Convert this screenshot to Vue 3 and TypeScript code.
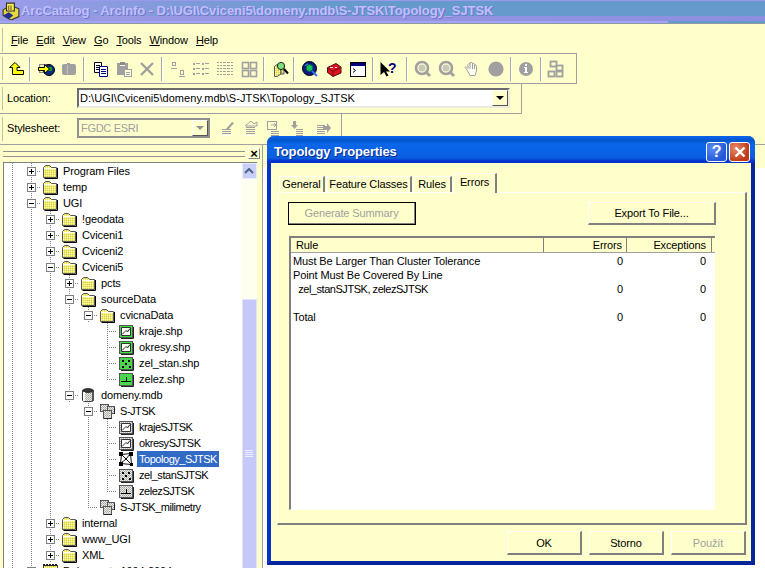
<script setup lang="ts">
type Shape = [string, Record<string, string | number>, string?];

const G = '#a0a0a0';
const r = (x: number, y: number, w: number, h: number, fill: string, stroke = 'none', sw = 1): Shape =>
  ['rect', { x: x + (stroke === 'none' ? 0 : 0.5), y: y + (stroke === 'none' ? 0 : 0.5), width: w, height: h, fill, stroke, 'stroke-width': sw }];
const p = (d: string, fill: string, stroke = 'none', sw = 1): Shape =>
  ['path', { d, fill, stroke, 'stroke-width': sw }];
const c = (cx: number, cy: number, rad: number, fill: string, stroke = 'none', sw = 1): Shape =>
  ['circle', { cx, cy, r: rad, fill, stroke, 'stroke-width': sw }];

const lines = (x: number, w: number, ys: number[], col = G): Shape[] => ys.map((y) => r(x, y, w, 1, col));

const polyGlyph: Shape[] = [p('M3.5 12.5V4.5H12.5V12.5ZM4 11.5L8 7.5 9.5 9 12 5.5', '#fff', '#333')];
const feature = (fill: string, kind: string): Shape[] => {
  const base: Shape[] = [r(1, 2, 13, 12, fill, '#555'), p('M15.5 4V15.5H3', 'none', '#222')];
  if (kind === 'poly') return [...base, ...polyGlyph];
  if (kind === 'point') return [...base, r(4, 5, 2, 2, '#000'), r(10, 5, 2, 2, '#000'), r(7, 8, 2, 2, '#000'), r(4, 11, 2, 2, '#000'), r(11, 11, 2, 2, '#000')];
  return [...base, p('M3 10.5H13M8.5 6V10.5', 'none', '#000')];
};

const icons: Record<string, Shape[]> = {
  folder: [
    p('M1.5 14.5V4.5L3.5 2.5H7.5L9.5 4.5H14.5V14.5Z', 'url(#ditherYellow)', '#555'),
    p('M2 5.5H14', 'none', '#fff'),
    p('M15.5 5V15.5H2.5', 'none', '#000'),
  ],
  drive: [
    r(1, 2, 14, 13, 'url(#ditherYellow)', '#444'),
    ...lines(1, 14, [1, 2], '#222'),
    ...[3, 6, 9, 12].map((x) => r(x, 0, 1, 2, '#fff')),
    ...lines(2, 12, [6, 9, 12], '#777'),
  ],
  shpPoly: feature('url(#ditherGreen)', 'poly'),
  shpPoint: feature('url(#ditherGreen)', 'point'),
  shpLine: feature('url(#ditherGreen)', 'line'),
  fcPoly: feature('url(#ditherGray)', 'poly'),
  fcPoint: feature('url(#ditherGray)', 'point'),
  fcLine: feature('url(#ditherGray)', 'line'),
  mdb: [
    p('M2.5 3.5V13.5C2.5 15 13.5 15 13.5 13.5V3.5Z', 'url(#ditherGray)', '#333'),
    ['ellipse', { cx: 8, cy: 3.5, rx: 5.5, ry: 2.5, fill: '#333' }],
    r(3, 5, 2, 9, '#fff'),
    r(12, 5, 2, 9, '#555'),
  ],
  dataset: [
    r(1, 1, 8, 7, 'url(#ditherGray)', '#555'),
    r(8, 3, 7, 7, 'url(#ditherGray)', '#555'),
    r(4, 7, 8, 8, '#d8d8d0', '#555'),
    r(5, 8, 6, 6, 'url(#ditherGray)'),
    p('M15.5 5V11M13 15.5H5', 'none', '#222'),
  ],
  topology: [
    p('M3.5 3.5L12.5 2.5 13.5 13.5 2.5 12.5ZM3.5 3.5L8 8 13.5 13.5M12.5 2.5L8 8 2.5 12.5', '#fff', '#111'),
    r(1, 1, 4, 4, '#000'), r(11, 1, 4, 4, '#000'), r(1, 11, 4, 4, '#000'), r(12, 12, 3, 3, '#000'), r(7, 7, 2, 2, '#000'),
  ],
  up: [p('M7 1.5L12 6.5H9V9.5H15.5V13.5H4.5V6.5H1.5Z', '#ff0', '#000')],
  connect: [
    r(1, 3, 9, 8, '#f2efc0', '#888'),
    c(11, 9, 5.5, '#0a2a80', '#000'),
    p('M9 6H14V10H10Z', '#169030'),
    p('M0.5 6.5H6.5V3.5L11.5 8 6.5 12.5V9.5H0.5Z', '#ff0', '#000'),
  ],
  disconnect: [p('M1 4.5Q1 3 3 3H6V2H9V3H13Q15 3 15 5V12Q15 14 13 14H3Q1 14 1 12Z', G), r(6, 4, 1, 9, '#c4c4b0')],
  copy: [
    p('M1.5 1.5H8.5V11.5H1.5Z', '#fff', '#000'),
    ...lines(3, 4, [4, 6, 8], '#000'),
    p('M6.5 5.5H14.5V15.5H6.5Z', '#fff', '#000080'),
    ...lines(8, 5, [8, 10, 12], '#000080'),
  ],
  paste: [
    r(1, 2, 11, 12, G),
    r(4, 1, 5, 3, '#8c8c8c'),
    r(4, 4, 5, 1, '#ffffcc'),
    r(8, 8, 7, 7, '#ffffe0', G),
    ...lines(10, 4, [11, 13]),
  ],
  del: [p('M2 2L14 14M14 2L2 14', 'none', G, 2.4)],
  largeIcons: [r(2, 1, 3, 3, 'none', G), ...lines(1, 6, [7]), r(10, 9, 3, 4, 'none', G), ...lines(9, 6, [15])],
  list: [...[2, 7, 12].flatMap((y) => [r(0, y, 2, 2, G), r(3, y, 4, 1, G), r(9, y, 2, 2, G), r(12, y, 4, 1, G)])],
  details: [...[1, 4, 7, 10, 13].flatMap((y) => [r(0, y, 2, 1, G), r(3, y, 13, 1, G)]), ...[5, 9, 13].map((x) => r(x, 1, 1, 13, '#ffffcc'))],
  thumbs: [r(1, 1, 6, 6, 'none', G, 1.6), r(9, 1, 6, 6, 'none', G, 1.6), r(1, 9, 6, 6, 'none', G, 1.6), r(9, 9, 6, 6, 'none', G, 1.6)],
  search: [
    p('M1.5 5.5L4 3.5H8V13L4 15.5H1.5Z', 'url(#ditherYellow)', '#555'),
    p('M8 4H11V13H8Z', 'url(#ditherYellow)', '#555'),
    c(8, 5, 3.6, '#7ce07c', '#222'),
    p('M11 8L15 12.5', 'none', '#000', 2),
  ],
  globe: [
    c(7.5, 7.5, 7, '#0a1a80', '#000'),
    c(7.5, 7, 3.4, '#18c060', '#0a6040'),
    p('M10 10L15 15', 'none', '#3070f0', 2),
    p('M3 5Q4 3 6 3', 'none', '#40a0ff'),
  ],
  toolbox: [
    p('M1.5 6.5L10 2.5 15 6V12L7 15.5 1.5 11.5Z', '#e01020', '#501010'),
    p('M1.5 7L7 10.5 15 6M7 10.5V15', 'none', '#701010'),
    r(4, 6, 3, 1, '#fff'), r(9, 6, 2, 1, '#fff'),
  ],
  cmd: [r(0, 1, 15, 14, '#fff', '#000'), r(1, 2, 14, 3, '#000080'), p('M3 7.5L5.5 9.5 3 11.5', 'none', '#000')],
  whats: [
    p('M0.5 1V14L4 11 6.5 15.5 8.5 14.5 6 10.5H10Z', '#000'),
    ['text', { x: 8, y: 12, 'font-size': 14, 'font-weight': 700, fill: '#000080', 'font-family': '"Liberation Sans", sans-serif' }, '?'],
  ],
  zoomIn: [c(7, 7, 6, 'none', G, 2.6), c(7, 7, 3.5, '#c8c8b8'), p('M11 11L15 15', 'none', G, 2.8)],
  zoomOut: [c(7, 7, 6, 'none', G, 2.6), c(7, 7, 3.5, '#c8c8b8'), p('M11 11L15 15', 'none', G, 2.8)],
  hand: [
    p('M3 9L1 6.5 2 5.5 4 7.5V3.5L5 2.5 6 3V1.5H7.5L8.5 2V2.5H10L10.5 4H12L12.5 5.5V10L11 14.5H6Z', '#fffff0', G),
    p('M6 3V8M8.5 2.5V8M10.5 4V8', 'none', G),
  ],
  fullExtent: [c(8, 8, 7.6, G)],
  info: [c(8, 8, 7, G), r(7, 3, 2, 2, '#fff'), r(7, 6, 2, 6, '#fff'), r(6, 6, 1, 1, '#fff'), r(6, 11, 4, 1, '#fff')],
  model: [r(3, 0, 6, 5, 'none', G, 1.8), r(9, 4, 6, 5, 'none', G, 1.8), r(1, 10, 6, 5, 'none', G, 1.8), r(9, 10, 6, 5, 'none', G, 1.8)],
  styleEdit: [...lines(3, 9, [9, 11, 13]), p('M7 9L13 2 15 3 9 10Z', G), r(1, 15, 12, 1, '#fff')],
  styleProps: [...lines(3, 9, [7, 9, 11, 13]), p('M2 6L8 1 11 4 14 2V6H3', 'none', G), r(1, 15, 12, 1, '#fff')],
  styleNew: [r(1, 1, 9, 8, 'none', G), p('M5 5H10M8 3L10 5 8 7', 'none', G), ...lines(5, 8, [11, 13, 15])],
  styleImport: [r(3, 1, 3, 4, G), p('M1 5H8L4.5 9Z', G), ...lines(6, 7, [9, 11, 13, 15])],
  styleExport: [...lines(1, 8, [5, 7, 9, 11, 13]), p('M7 6H11V3L15 8 11 13V10H7Z', G)],
};

const layoutBar = (items: Array<string | number>, centers: number[], start: number) => {
  let end = start;
  return items.map((it, idx) => {
    const sep = it === 0;
    const size = sep ? 2 : 16;
    const left = centers[idx] - size / 2;
    const ml = Math.round(left - end);
    end = end + ml + size;
    return { sep, name: sep ? '' : String(it), ml };
  });
};

const mainBar = layoutBar(
  ['up', 0, 'connect', 'disconnect', 0, 'copy', 'paste', 'del', 0, 'largeIcons', 'list', 'details', 'thumbs', 0, 'search', 0, 'globe', 'toolbox', 'cmd', 0, 'whats', 0, 'zoomIn', 'zoomOut', 'hand', 'fullExtent', 0, 'info', 0, 'model'],
  [19, 33, 49, 72, 87, 104, 127, 150, 165, 181, 204, 228, 252, 267, 284, 297, 313, 337, 361, 376, 391, 410, 426, 450, 475, 499, 514, 529, 544, 558],
  3,
);
const styleBar = layoutBar(
  ['styleEdit', 'styleProps', 'styleNew', 'styleImport', 'styleExport'],
  [228, 252, 275, 299, 325],
  211,
);

const menus = ['File', 'Edit', 'View', 'Go', 'Tools', 'Window', 'Help'];

type Row = { cells: string; icon: string; label: string; selected?: boolean };
const tree: Row[] = [
  { cells: 'v+', icon: 'folder', label: 'Program Files' },
  { cells: 'v+', icon: 'folder', label: 'temp' },
  { cells: 'v-', icon: 'folder', label: 'UGI' },
  { cells: 'vv+', icon: 'folder', label: '!geodata' },
  { cells: 'vv+', icon: 'folder', label: 'Cviceni1' },
  { cells: 'vv+', icon: 'folder', label: 'Cviceni2' },
  { cells: 'vv-', icon: 'folder', label: 'Cviceni5' },
  { cells: 'vvv+', icon: 'folder', label: 'pcts' },
  { cells: 'vvv-', icon: 'folder', label: 'sourceData' },
  { cells: 'vvvv-', icon: 'folder', label: 'cvicnaData' },
  { cells: 'vvvv T', icon: 'shpPoly', label: 'kraje.shp' },
  { cells: 'vvvv T', icon: 'shpPoly', label: 'okresy.shp' },
  { cells: 'vvvv T', icon: 'shpPoint', label: 'zel_stan.shp' },
  { cells: 'vvvv L', icon: 'shpLine', label: 'zelez.shp' },
  { cells: 'vvv-', icon: 'mdb', label: 'domeny.mdb' },
  { cells: 'vvv -', icon: 'dataset', label: 'S-JTSK' },
  { cells: 'vvv vT', icon: 'fcPoly', label: 'krajeSJTSK' },
  { cells: 'vvv vT', icon: 'fcPoly', label: 'okresySJTSK' },
  { cells: 'vvv vT', icon: 'topology', label: 'Topology_SJTSK', selected: true },
  { cells: 'vvv vT', icon: 'fcPoint', label: 'zel_stanSJTSK' },
  { cells: 'vvv vL', icon: 'fcLine', label: 'zelezSJTSK' },
  { cells: 'vvv L', icon: 'dataset', label: 'S-JTSK_milimetry' },
  { cells: 'vv+', icon: 'folder', label: 'internal' },
  { cells: 'vv+', icon: 'folder', label: 'www_UGI' },
  { cells: 'vv+', icon: 'folder', label: 'XML' },
  { cells: 'v-', icon: 'drive', label: 'Dokumenty 1994-2004' },
];

const cellClass = (ch: string) =>
  ({ v: 'cell-v', T: 'cell-t', L: 'cell-l', '+': 'cell-t', '-': 'cell-t', ' ': '' } as Record<string, string>)[ch] ?? '';

const isTight = (s: string) => s.includes('JTSK');

const tabs = [
  { label: 'General', width: 46 },
  { label: 'Feature Classes', width: 86 },
  { label: 'Rules', width: 39 },
  { label: 'Errors', width: 44, active: true },
];

const rules = [
  { rule: 'Must Be Larger Than Cluster Tolerance', errors: '0', exceptions: '0' },
  { rule: 'Point Must Be Covered By Line', errors: '', exceptions: '' },
  { rule: '  zel_stanSJTSK, zelezSJTSK', errors: '0', exceptions: '0' },
  { rule: '', errors: '', exceptions: '' },
  { rule: 'Total', errors: '0', exceptions: '0' },
];
</script>

<template>
  <div class="page">
    <svg class="defs" width="0" height="0" aria-hidden="true">
      <defs>
        <pattern id="ditherYellow" width="2" height="2" patternUnits="userSpaceOnUse">
          <rect width="2" height="2" fill="#f8f040" />
          <rect width="1" height="1" fill="#fff8c0" />
          <rect x="1" y="1" width="1" height="1" fill="#c8c890" />
        </pattern>
        <pattern id="ditherGreen" width="2" height="2" patternUnits="userSpaceOnUse">
          <rect width="2" height="2" fill="#38e838" />
          <rect width="1" height="1" fill="#909890" />
        </pattern>
        <pattern id="ditherGray" width="2" height="2" patternUnits="userSpaceOnUse">
          <rect width="2" height="2" fill="#ecece4" />
          <rect width="1" height="1" fill="#a0a0a0" />
          <rect x="1" y="1" width="1" height="1" fill="#b8b8b8" />
        </pattern>
      </defs>
    </svg>

    <header class="titlebar">
      <svg class="app-icon" viewBox="0 0 16 16" width="18" height="18">
        <path d="M1 7L8 3 15 6V13L8 16 1 12Z" fill="#e8d840" stroke="#333" />
        <path d="M4 1H11V8H4Z" fill="#f4ee50" stroke="#333" />
        <path d="M1 12L6 9 10 12 6 15Z" fill="#20308c" />
        <path d="M6 3V7M8 3V7" stroke="#806020" />
      </svg>
      <span class="app-title">ArcCatalog - ArcInfo - D:\UGI\Cviceni5\domeny.mdb\S-JTSK\Topology_SJTSK</span>
    </header>

    <nav class="menubar">
      <span v-for="m in menus" :key="m" class="menu"><u>{{ m[0] }}</u>{{ m.slice(1) }}</span>
    </nav>

    <div class="bar bar-main">
      <template v-for="(it, i) in mainBar" :key="i">
        <span v-if="it.sep" class="sep" :style="{ marginLeft: it.ml + 'px' }"></span>
        <svg v-else class="tool" viewBox="0 0 16 16" width="16" height="16" :style="{ marginLeft: it.ml + 'px' }">
          <component :is="s[0]" v-for="(s, j) in icons[it.name]" :key="j" v-bind="s[1]">{{ s[2] }}</component>
        </svg>
      </template>
    </div>

    <div class="bar bar-location">
      <span class="bar-label">Location:</span>
      <div class="combo">
        <span class="combo-text">D:\UGI\Cviceni5\domeny.mdb\S-JTSK\Topology_SJTSK</span>
        <span class="combo-btn"><i class="caret"></i></span>
      </div>
    </div>

    <div class="bar bar-style">
      <span class="bar-label">Stylesheet:</span>
      <div class="combo combo-off">
        <span class="combo-text">FGDC ESRI</span>
        <span class="combo-btn"><i class="caret caret-off"></i></span>
      </div>
      <svg v-for="(it, i) in styleBar" :key="i" class="tool" viewBox="0 0 16 16" width="16" height="16" :style="{ marginLeft: it.ml + 'px' }">
        <component :is="s[0]" v-for="(s, j) in icons[it.name]" :key="j" v-bind="s[1]" />
      </svg>
    </div>

    <main class="workspace">
      <aside class="tree-pane">
        <div class="pane-head">
          <span class="grip"></span>
          <span class="pane-close">×</span>
        </div>
        <div class="tree-box">
          <div class="tree">
            <div v-for="row in tree" :key="row.label" class="tree-row">
              <span v-for="(ch, k) in row.cells.split('')" :key="k" class="cell" :class="cellClass(ch)">
                <span v-if="ch === '+' || ch === '-'" class="expander">
                  <i class="exp-h"></i>
                  <i v-if="ch === '+'" class="exp-v"></i>
                </span>
              </span>
              <svg class="node-icon" viewBox="0 0 16 16" width="16" height="16">
                <component :is="s[0]" v-for="(s, j) in icons[row.icon]" :key="j" v-bind="s[1]" />
              </svg>
              <span class="node-label" :class="{ selected: row.selected, tight: isTight(row.label) }">{{ row.label }}</span>
            </div>
          </div>
          <div class="scrollbar">
            <span class="scroll-up">
              <svg viewBox="0 0 10 6" width="10" height="6"><path d="M1 5L5 1 9 5" fill="none" stroke="#4d6185" stroke-width="2" /></svg>
            </span>
            <span class="scroll-thumb"><i></i><i></i><i></i><i></i></span>
          </div>
        </div>
      </aside>
      <div class="right-back"><div class="right-white"></div></div>
    </main>

    <section class="dialog">
      <header class="dlg-title">
        <span class="dlg-name">Topology Properties</span>
        <span class="dlg-btn dlg-help">?</span>
        <span class="dlg-btn dlg-close">
          <svg viewBox="0 0 12 12" width="12" height="12"><path d="M1.5 1.5L10.5 10.5M10.5 1.5L1.5 10.5" stroke="#fff" stroke-width="2.4" /></svg>
        </span>
      </header>
      <div class="dlg-body">
        <div class="tabs">
          <span v-for="t in tabs" :key="t.label" class="tab" :class="{ active: t.active }" :style="{ width: t.width + 'px' }">{{ t.label }}</span>
        </div>
        <div class="panel">
          <div class="panel-actions">
            <button class="btn btn-default" disabled>Generate Summary</button>
            <button class="btn btn-export">Export To File...</button>
          </div>
          <div class="list">
            <div class="list-head">
              <span class="col-rule">Rule</span>
              <span class="col-err">Errors</span>
              <span class="col-exc">Exceptions</span>
            </div>
            <div v-for="(row, i) in rules" :key="i" class="list-row">
              <span class="cell-rule" :class="{ tight: isTight(row.rule) }">{{ row.rule }}</span>
              <span class="cell-num cell-num-err">{{ row.errors }}</span>
              <span class="cell-num cell-num-exc">{{ row.exceptions }}</span>
            </div>
          </div>
        </div>
        <footer class="dlg-foot">
          <button class="btn btn-foot">OK</button>
          <button class="btn btn-foot">Storno</button>
          <button class="btn btn-foot btn-off" disabled>Použít</button>
        </footer>
      </div>
    </section>
  </div>
</template>

<style scoped>
.page {
  position: relative;
  width: 765px;
  height: 568px;
  overflow: hidden;
  background: #ffffcc;
  font-family: "Liberation Sans", Arial, sans-serif;
  font-size: 11px;
  line-height: 14px;
  letter-spacing: -0.12px;
  color: #000;
}
.defs { position: absolute; }
.tight { letter-spacing: -0.46px; }

.titlebar {
  height: 24px;
  box-sizing: border-box;
  display: flex;
  align-items: center;
  padding: 0 0 3px 2px;
  border-top: 1px solid #9a9aec;
  border-bottom: 1px solid #8c98a4;
  background:
    linear-gradient(to right, #a4a4f4 0, #a4a4f4 668px, transparent 668px) 0 20px / 100% 3px no-repeat,
    linear-gradient(to right, #9a9ae4, #8e8ee0) 0 15px / 100% 5px no-repeat,
    linear-gradient(to right, #9c9ce8 0, #6699cc 340px);
}
.app-icon { flex: none; }
.app-title {
  margin-left: 1px;
  font-size: 13px;
  font-weight: 700;
  letter-spacing: -0.09px;
  white-space: nowrap;
  color: #c0c0ff;
  text-shadow: 1px 1px 0 #7474c8;
}

.menubar {
  height: 29px;
  display: flex;
  align-items: center;
  gap: 8px;
  padding: 3px 0 0 11px;
  box-sizing: border-box;
  background: linear-gradient(#c0c0a8, #c0c0a8) 2px 4px / 1px calc(100% - 5px) no-repeat;
}

.bar {
  display: flex;
  align-items: center;
  box-sizing: border-box;
  border-right: 1px solid #a0a0a0;
  background: linear-gradient(#c0c0a8, #c0c0a8) 2px 3px / 1px calc(100% - 6px) no-repeat;
}
.bar-main { width: 577px; height: 31px; border-top: 1px solid #a0a0a0; border-bottom: 1px solid #a0a0a0; }
.bar-location { width: 522px; height: 30px; padding: 0 0 1px 7px; border-bottom: 1px solid #a0a0a0; }
.bar-style { width: 342px; height: 30px; padding: 0 0 2px 7px; }

.sep { flex: none; width: 2px; height: 24px; background: #a8a8a0; border-right: 1px solid #fff; box-sizing: border-box; }
.tool { flex: none; display: block; overflow: visible; }

.bar-label { width: 70px; flex: none; }
.combo {
  flex: none;
  width: 433px;
  height: 20px;
  box-sizing: border-box;
  display: flex;
  align-items: center;
  background: #fff;
  border: 2px solid #6c6c6c;
  border-right-color: #ececdc;
  border-bottom-color: #ececdc;
}
.combo-text { flex: 1; padding-left: 1px; white-space: nowrap; letter-spacing: 0.04px; }
.combo-btn {
  flex: none;
  width: 16px;
  height: 16px;
  box-sizing: border-box;
  display: flex;
  align-items: center;
  justify-content: center;
  background: #ffffcc;
  border: 1px solid #fff;
  border-right-color: #555;
  border-bottom-color: #555;
}
.caret { width: 0; height: 0; border: 4px solid transparent; border-top-color: #000; border-bottom: 0; }
.caret-off { border-top-color: #909090; }
.combo-off { width: 133px; background: #ffffcc; border-color: #909090; }
.combo-off .combo-text { color: #a0a0a0; padding-left: 2px; letter-spacing: -0.3px; }

.workspace {
  display: flex;
  height: 424px;
  border-top: 1px solid #a0a0a0;
  box-sizing: border-box;
}
.tree-pane { width: 263px; flex: none; border-right: 1px solid #a0a0a0; box-sizing: border-box; }
.pane-head { height: 17px; display: flex; align-items: center; padding: 0 2px 0 3px; box-sizing: border-box; }
.grip { width: 242px; height: 4px; border-top: 1px solid #909090; border-bottom: 1px solid #909090; }
.pane-close {
  margin-left: 3px;
  width: 12px;
  height: 11px;
  box-sizing: border-box;
  border: 1px solid #fff;
  border-right-color: #888;
  border-bottom-color: #888;
  display: flex;
  align-items: center;
  justify-content: center;
  font-weight: 700;
  font-size: 13px;
  line-height: 9px;
}
.tree-box {
  margin-left: 3px;
  width: 254px;
  height: 420px;
  box-sizing: border-box;
  display: flex;
  overflow: hidden;
  background: #fff;
  border-top: 1px solid #808080;
  border-left: 1px solid #808080;
}
.tree { flex: 1; min-width: 0; margin-left: -1px; }
.tree-row { height: 16px; display: flex; align-items: center; white-space: nowrap; }
.cell {
  flex: none;
  width: 19px;
  height: 16px;
  display: flex;
  align-items: center;
  justify-content: center;
  background-repeat: no-repeat;
}
.cell-v {
  background-image: repeating-linear-gradient(to bottom, #808080 0 1px, transparent 1px 2px);
  background-size: 1px 100%;
  background-position: 9px 0;
}
.cell-t {
  background-image:
    repeating-linear-gradient(to bottom, #808080 0 1px, transparent 1px 2px),
    repeating-linear-gradient(to right, #808080 0 1px, transparent 1px 2px);
  background-size: 1px 100%, 10px 1px;
  background-position: 9px 0, 9px 8px;
}
.cell-l {
  background-image:
    repeating-linear-gradient(to bottom, #808080 0 1px, transparent 1px 2px),
    repeating-linear-gradient(to right, #808080 0 1px, transparent 1px 2px);
  background-size: 1px 8px, 10px 1px;
  background-position: 9px 0, 9px 8px;
}
.expander {
  position: relative;
  width: 9px;
  height: 9px;
  box-sizing: border-box;
  background: #fff;
  border: 1px solid #808080;
}
.exp-h { position: absolute; left: 1px; top: 3px; width: 5px; height: 1px; background: #000; }
.exp-v { position: absolute; left: 3px; top: 1px; width: 1px; height: 5px; background: #000; }
.node-icon { flex: none; margin-left: 1px; }
.node-label { margin-left: 3px; padding: 0 2px; height: 16px; line-height: 16px; }
.node-label.selected { background: #316ac5; color: #fff; }

.scrollbar {
  flex: none;
  width: 16px;
  background: #fffff0;
  display: flex;
  flex-direction: column;
  align-items: center;
}
.scroll-up {
  flex: none;
  width: 15px;
  height: 16px;
  background: #c8d0f8;
  border: 1px solid #e8ecff;
  box-sizing: border-box;
  display: flex;
  align-items: center;
  justify-content: center;
}
.scroll-thumb {
  flex: none;
  margin-top: 120px;
  width: 15px;
  height: 308px;
  background: #c5c8f8;
  border: 1px solid #e0e4ff;
  box-sizing: border-box;
  display: flex;
  flex-direction: column;
  align-items: center;
  justify-content: center;
  gap: 1px;
}
.scroll-thumb i { width: 8px; height: 1px; background: #eef0ff; }

.right-back { flex: 1; display: flex; flex-direction: column; justify-content: flex-end; }
.right-white { height: 400px; background: #fff; }

.dialog {
  position: absolute;
  left: 267px;
  top: 136px;
  width: 488px;
  height: 429px;
  box-sizing: border-box;
  display: flex;
  flex-direction: column;
  border: 4px solid #0831c8;
  border-top: 0;
  border-right-color: #06259c;
  border-bottom-color: #06259c;
  border-radius: 7px 7px 0 0;
  background: #ffffcc;
}
.dlg-title {
  flex: none;
  height: 27px;
  box-sizing: border-box;
  margin: 0 -4px;
  padding: 4px 5px 0 7px;
  display: flex;
  align-items: center;
  gap: 2px;
  border-radius: 7px 7px 0 0;
  background: linear-gradient(to bottom, #0a60e6 0, #0a60e6 2px, #0258cf 3px, #0258cf 5px, #0a66ea 8px, #0a5ee0 22px, #0331cc 25px, #0331cc 27px);
}
.dlg-name {
  flex: 1;
  color: #fff;
  font-size: 13px;
  font-weight: 700;
  letter-spacing: -0.15px;
  text-shadow: 1px 1px 0 #0a2a90;
}
.dlg-btn {
  flex: none;
  width: 21px;
  height: 20px;
  box-sizing: border-box;
  display: flex;
  align-items: center;
  justify-content: center;
  border: 1px solid #fff;
  border-radius: 3px;
}
.dlg-help {
  background: radial-gradient(circle at 30% 30%, #5a8cf4, #2458d8 70%);
  color: #fff;
  font-size: 16px;
  font-weight: 700;
}
.dlg-close { background: radial-gradient(circle at 30% 30%, #e88a68, #c03c18 70%); }

.dlg-body {
  flex: 1;
  min-height: 0;
  display: flex;
  flex-direction: column;
  padding: 10px 4px 0 6px;
}
.tabs { flex: none; height: 19px; display: flex; align-items: flex-end; padding-left: 2px; }
.tab {
  flex: none;
  height: 16px;
  line-height: 14px;
  margin-right: 1px;
  text-align: center;
  border-top: 1px solid #fff;
  border-left: 1px solid #fff;
  border-right: 2px solid #808080;
  box-sizing: border-box;
}
.tab.active { height: 20px; line-height: 16px; margin-bottom: -1px; position: relative; background: #ffffcc; }
.panel {
  flex: none;
  height: 333px;
  box-sizing: border-box;
  border-top: 1px solid #fff;
  border-left: 1px solid #fff;
  border-right: 2px solid #808080;
  border-bottom: 2px solid #808080;
  padding: 9px 29px 0 10px;
}
.panel-actions { display: flex; justify-content: space-between; }
.btn {
  display: block;
  font: inherit;
  letter-spacing: inherit;
  color: #000;
  background: #ffffcc;
  padding: 0;
  border: 1px solid #fff;
  border-right: 2px solid #808080;
  border-bottom: 2px solid #808080;
  box-sizing: border-box;
}
.btn-default {
  width: 128px;
  height: 23px;
  color: #a0a0a0;
  outline: 1px solid #000;
  outline-offset: -1px;
}
.btn-export { width: 128px; height: 23px; }
.list {
  margin: 11px 0 0 1px;
  width: 426px;
  height: 274px;
  box-sizing: border-box;
  background: #fff;
  border-left: 2px solid #808080;
  border-bottom: 1px solid #fffff0;
}
.list-head {
  height: 17px;
  display: grid;
  grid-template-columns: 253px 83px 85px 1fr;
  background: #ffffcc;
  border-top: 2px solid #808080;
  border-bottom: 1px solid #a0a0a0;
  box-sizing: border-box;
  line-height: 14px;
}
.col-rule { padding-left: 5px; border-right: 1px solid #808080; }
.col-err { text-align: right; padding-right: 4px; border-right: 1px solid #808080; }
.col-exc { grid-column: 3; text-align: right; padding-right: 5px; border-right: 1px solid #808080; }
.list-row {
  height: 14px;
  display: grid;
  grid-template-columns: 253px 83px 85px;
}
.cell-rule { padding-left: 2px; white-space: pre; }
.cell-num { text-align: right; }
.cell-num-err { padding-right: 4px; }
.cell-num-exc { padding-right: 6px; }
.list-head + .list-row { margin-top: 1px; }

.dlg-foot { flex: none; display: flex; justify-content: flex-end; gap: 7px; padding: 6px 1px 0 0; }
.btn-foot { width: 75px; height: 24px; }
.btn-off { color: #a0a0a0; }
</style>
